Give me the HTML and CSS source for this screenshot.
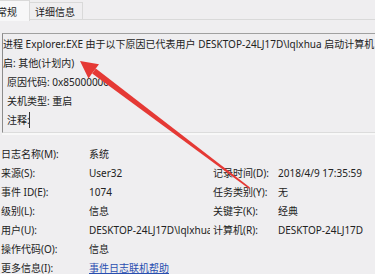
FILE: index.html
```html
<!DOCTYPE html>
<html lang="zh-CN">
<head>
<meta charset="utf-8">
<link rel="stylesheet" href="styles.css">
</head>
<body>
<div class="window">
  <div class="tabs">
    <div class="tab active">常规</div>
    <div class="tab">详细信息</div>
  </div>
  <div class="panel">
    <div class="desc">
      <div class="line">进程 Explorer.EXE 由于以下原因已代表用户 DESKTOP-24LJ17D\lqlxhua 启动计算机 D</div>
      <div class="line">启: 其他(计划内)</div>
      <div class="line indent">原因代码: 0x85000000</div>
      <div class="line indent">关机类型: 重启</div>
      <div class="line indent">注释: <span class="caret"></span></div>
    </div>
    <div class="props">
      <div class="lbl">日志名称(M):</div><div class="val">系统</div><div></div><div></div>
      <div class="lbl">来源(S):</div><div class="val">User32</div><div class="lbl">记录时间(D):</div><div class="val">2018/4/9 17:35:59</div>
      <div class="lbl">事件 ID(E):</div><div class="val">1074</div><div class="lbl">任务类别(Y):</div><div class="val">无</div>
      <div class="lbl">级别(L):</div><div class="val">信息</div><div class="lbl">关键字(K):</div><div class="val">经典</div>
      <div class="lbl">用户(U):</div><div class="val clip">DESKTOP-24LJ17D\lqlxhua</div><div class="lbl">计算机(R):</div><div class="val">DESKTOP-24LJ17D</div>
      <div class="lbl">操作代码(O):</div><div class="val">信息</div><div></div><div></div>
      <div class="lbl">更多信息(I):</div><div class="val"><a class="link" href="#">事件日志联机帮助</a></div><div></div><div></div>
    </div>
  </div>
  <svg class="arrow" width="375" height="274" viewBox="0 0 375 274">
    <polygon points="80,61 99,64.3 95,69.5 92,73.5 88.5,78.5" fill="#e53935"/>
    <polygon points="95.8,68.6 92.2,73.4 249,188.8 250,187.4" fill="#e53935"/>
  </svg>
</div>
</body>
</html>
```

FILE: styles.css
```css
html, body {
  margin: 0;
  padding: 0;
  background: #efeef0;
}
body {
  width: 375px;
  height: 274px;
  overflow: hidden;
  font-family: "Noto Sans", "Noto Sans CJK SC", sans-serif;
  font-size: 10px;
  color: #222;
}
.window {
  position: relative;
  width: 375px;
  height: 274px;
  overflow: hidden;
}
.tabs {
  display: flex;
  height: 20px;
  border-bottom: 1px solid #d9d9d9;
  box-sizing: border-box;
  margin-left: -3px;
}
.tab {
  height: 18px;
  margin-top: 2px;
  padding: 0 7px 0 5px;
  line-height: 18px;
  border: 1px solid #d9d9d9;
  border-bottom: none;
  box-sizing: border-box;
  font-size: 10px;
  color: #222;
}
.tab.active {
  height: 21px;
  margin-top: 0;
  line-height: 22px;
  background: #f7f7f8;
  padding: 0 12px 0 0;
  border-left: none;
}
.tab + .tab {
  border-left: none;
}
.panel {
  padding-top: 13px;
}
.desc {
  margin-left: 2px;
  border-top: 1px solid #a0a0a0;
  border-left: 1px solid #8c8c8c;
  border-bottom: 1px solid #dcdcdc;
  box-shadow: 0 2px 0 #f8f8f8;
  height: 97px;
  padding-top: 1px;
  overflow: hidden;
}
.line {
  height: 19px;
  line-height: 19px;
  white-space: nowrap;
  padding-left: 0;
}
.line.indent {
  padding-left: 4px;
}
.caret {
  display: inline-block;
  width: 0;
  height: 16px;
  border-left: 1.5px solid #333;
  vertical-align: -4px;
  margin-left: -3px;
}
.props {
  display: grid;
  grid-template-columns: 88px 124px 65px 1fr;
  grid-auto-rows: 19px;
  margin-top: 12px;
  padding-left: 1px;
  line-height: 19px;
  white-space: nowrap;
}
.val.clip {
  overflow: hidden;
  margin-right: 3px;
}
.link {
  color: #2a4fb0;
  text-decoration: underline;
}
.arrow {
  position: absolute;
  left: 0;
  top: 0;
  pointer-events: none;
}
```
